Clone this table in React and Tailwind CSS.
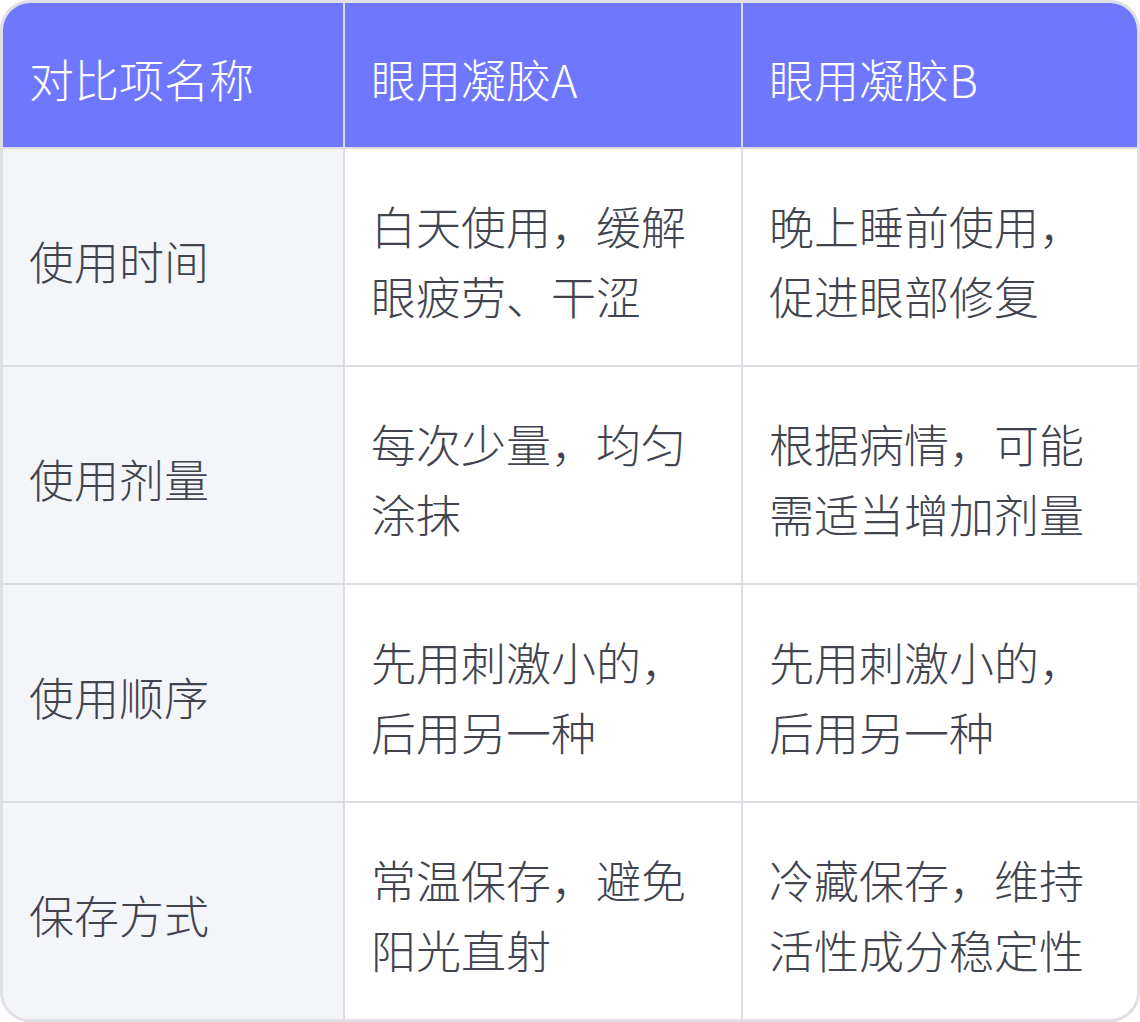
import React from 'react';

const rows = [
  { name: '使用时间', a: '白天使用，缓解眼疲劳、干涩', b: '晚上睡前使用，促进眼部修复' },
  { name: '使用剂量', a: '每次少量，均匀涂抹', b: '根据病情，可能需适当增加剂量' },
  { name: '使用顺序', a: '先用刺激小的，后用另一种', b: '先用刺激小的，后用另一种' },
  { name: '保存方式', a: '常温保存，避免阳光直射', b: '冷藏保存，维持活性成分稳定性' },
];

export default function App() {
  return (
    <div
      className="w-[1140px] h-[1022px] bg-white"
      style={{ fontFamily: '"Noto Sans CJK SC", "Noto Sans", sans-serif' }}
    >
      <div className="border-[3px] border-[#dfe0e5] rounded-[30px] overflow-hidden text-[45px] leading-[70px] font-light">
        <div className="grid grid-cols-[340px_398px_1fr] bg-[#7077ff] text-white h-[144px]">
          <div className="flex items-center px-[26px] pt-[7px]">对比项名称</div>
          <div className="flex items-center px-[26px] pt-[7px] border-l-2 border-[#dcdde3]">眼用凝胶A</div>
          <div className="flex items-center px-[26px] pt-[7px] border-l-2 border-[#dcdde3]">眼用凝胶B</div>
        </div>
        {rows.map((row) => (
          <div
            key={row.name}
            className="grid grid-cols-[340px_398px_1fr] h-[218px] border-t-2 border-[#dcdde3] text-[#41444f]"
          >
            <div className="flex items-center px-[26px] pt-[7px] bg-[#f4f5f9]">{row.name}</div>
            <div className="flex items-center px-[26px] pt-[7px] border-l-2 border-[#dcdde3]">{row.a}</div>
            <div className="flex items-center px-[26px] pt-[7px] border-l-2 border-[#dcdde3]">{row.b}</div>
          </div>
        ))}
      </div>
    </div>
  );
}
